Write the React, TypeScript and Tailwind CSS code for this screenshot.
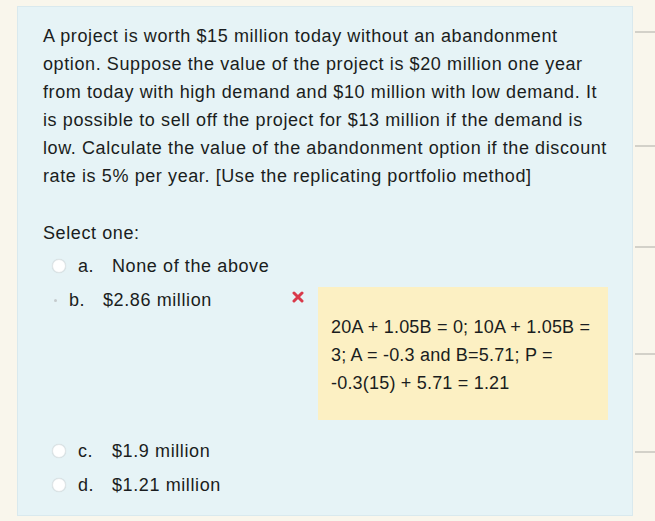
import React from "react";

const question = [
  "A project is worth $15 million today without an abandonment",
  "option. Suppose the value of the project is $20 million one year",
  "from today with high demand and $10 million with low demand. It",
  "is possible to sell off the project for $13 million if the demand is",
  "low. Calculate the value of the abandonment option if the discount",
  "rate is 5% per year. [Use the replicating portfolio method]",
];

const feedback = [
  "20A + 1.05B = 0; 10A + 1.05B =",
  "3; A = -0.3 and B=5.71; P =",
  "-0.3(15) + 5.71 = 1.21",
];

function Radio() {
  return (
    <span className="w-[14px] h-[14px] rounded-full bg-white border border-[#dfe5e7] shadow-[0_0_1px_rgba(0,0,0,0.15)] shrink-0" />
  );
}

function Option({ letter, text }: { letter: string; text: string }) {
  return (
    <div className="flex items-center h-[34px] pl-[9px]">
      <Radio />
      <span className="ml-[12px] w-[34px]">{letter}</span>
      <span>{text}</span>
    </div>
  );
}

export default function App() {
  return (
    <div
      className="w-[655px] h-[521px] bg-[#f9f6ec] flex overflow-hidden text-[#1a1d20]"
      style={{ fontFamily: '"Liberation Sans", Arial, sans-serif' }}
    >
      {/* question panel */}
      <div className="ml-[17px] mt-[6px] w-[616px] h-[510px] bg-[#e6f3f6] border border-[#d9e9ee] pl-[25px] pt-[15px] text-[18px] leading-[28px] tracking-[0.6px]">
        <div className="whitespace-nowrap">
          {question.map((line) => (
            <div key={line}>{line}</div>
          ))}
        </div>

        <div className="mt-[29px]">Select one:</div>

        <div className="mt-[2px]">
          <Option letter="a." text="None of the above" />

          <div className="flex">
            <div className="flex items-center h-[34px] self-start">
              <span className="ml-[11px] w-[3px] h-[3px] rounded-full bg-[#c5cbcd]" />
              <span className="ml-[12px] w-[34px]">b.</span>
              <span className="w-[189px]">$2.86 million</span>
              <svg width="12" height="12" viewBox="0 0 12 12" className="mb-[6px]">
                <path
                  d="M2 2 L10 10 M10 2 L2 10"
                  stroke="#d9394a"
                  strokeWidth="3"
                  strokeLinecap="round"
                />
              </svg>
            </div>
            <div className="ml-[14px] mt-[4px] mb-[14px] w-[290px] bg-[#fcf0c3] pl-[13px] pt-[26px] pb-[23px] whitespace-nowrap tracking-[0.2px]">
              {feedback.map((line) => (
                <div key={line}>{line}</div>
              ))}
            </div>
          </div>

          <Option letter="c." text="$1.9 million" />
          <Option letter="d." text="$1.21 million" />
        </div>
      </div>

      {/* right side rail */}
      <div className="ml-[2px] flex-1 flex flex-col">
        <div className="mt-[31px] h-[2px] bg-[#d3d1c9]" />
        <div className="mt-[112px] h-[2px] bg-[#d3d1c9]" />
        <div className="mt-[99px] h-[2px] bg-[#d3d1c9]" />
        <div className="mt-[105px] h-[2px] bg-[#d3d1c9]" />
        <div className="mt-[96px] h-[2px] bg-[#d3d1c9]" />
      </div>
    </div>
  );
}
